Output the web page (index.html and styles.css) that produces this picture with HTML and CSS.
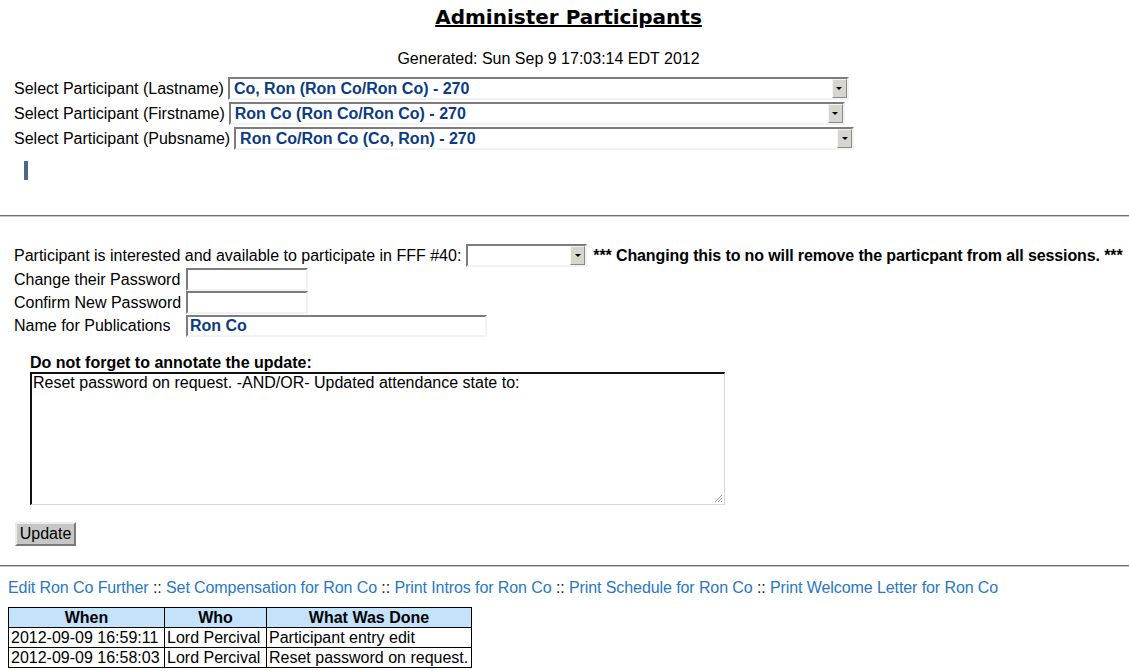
FILE: index.html
```html
<!DOCTYPE html>
<html>
<head>
<meta charset="utf-8">
<title>Administer Participants</title>
<link rel="stylesheet" href="styles.css">
</head>
<body>
<h1 class="title">Administer Participants</h1>
<p class="generated">Generated: Sun Sep 9 17:03:14 EDT 2012</p>

<div class="pickers">
  <div class="pick-row">
    <span class="pick-label">Select Participant (Lastname)</span>
    <div class="sel sel-last"><span class="sel-text">Co, Ron (Ron Co/Ron Co) - 270</span><span class="sel-btn"><span class="tri"></span></span></div>
  </div>
  <div class="pick-row">
    <span class="pick-label">Select Participant (Firstname)</span>
    <div class="sel sel-first"><span class="sel-text">Ron Co (Ron Co/Ron Co) - 270</span><span class="sel-btn"><span class="tri"></span></span></div>
  </div>
  <div class="pick-row">
    <span class="pick-label">Select Participant (Pubsname)</span>
    <div class="sel sel-pubs"><span class="sel-text">Ron Co/Ron Co (Co, Ron) - 270</span><span class="sel-btn"><span class="tri"></span></span></div>
  </div>
  <span class="cursor-bar"></span>
</div>

<hr class="rule rule-top">

<form class="edit-form">
  <div class="interest-row">
    <span>Participant is interested and available to participate in FFF #40:</span>
    <div class="sel sel-interest"><span class="sel-text"></span><span class="sel-btn"><span class="tri"></span></span></div>
    <strong class="warning">*** Changing this to no will remove the particpant from all sessions. ***</strong>
  </div>
  <div class="field-grid">
    <span class="field-label">Change their Password</span>
    <span class="inp inp-short"></span>
    <span class="field-label">Confirm New Password</span>
    <span class="inp inp-short"></span>
    <span class="field-label">Name for Publications</span>
    <span class="inp inp-long">Ron Co</span>
  </div>
  <div class="annotate">
    <div class="annotate-label">Do not forget to annotate the update:</div>
    <div class="textarea">Reset password on request. -AND/OR- Updated attendance state to:<span class="grip"><svg width="10" height="10" viewBox="0 0 10 10"><path d="M9 2 L2 9 M9 5 L5 9 M9 8 L8 9" stroke="#999" stroke-width="1"/></svg></span></div>
  </div>
  <div class="actions"><span class="button">Update</span></div>
</form>

<hr class="rule rule-bottom">

<div class="links">
  <a href="#">Edit Ron Co Further</a> :: <a href="#">Set Compensation for Ron Co</a> :: <a href="#">Print Intros for Ron Co</a> :: <a href="#">Print Schedule for Ron Co</a> :: <a href="#">Print Welcome Letter for Ron Co</a>
</div>

<table class="history">
  <tr><th class="c-when">When</th><th class="c-who">Who</th><th class="c-what">What Was Done</th></tr>
  <tr><td>2012-09-09 16:59:11</td><td>Lord Percival</td><td>Participant entry edit</td></tr>
  <tr><td>2012-09-09 16:58:03</td><td>Lord Percival</td><td>Reset password on request.</td></tr>
</table>
</body>
</html>
```

FILE: styles.css
```css
html, body {
  margin: 0;
  padding: 0;
  background: #fff;
}
body {
  font-family: "Liberation Sans", Arial, sans-serif;
  font-size: 16px;
  color: #000;
}
.title {
  font-family: "DejaVu Sans", Verdana, sans-serif;
  font-weight: bold;
  font-size: 20px;
  line-height: 24px;
  text-decoration: underline;
  text-align: center;
  margin: 5px 0 0;
  padding-left: 8px;
}
.generated {
  text-align: center;
  margin: 20px 0 0;
  line-height: 19px;
  padding-right: 32px;
}
.pickers {
  padding: 0 0 0 14px;
  margin-top: 9px;
  display: flex;
  flex-direction: column;
}
.pick-row {
  display: flex;
  align-items: center;
  gap: 4px;
  height: 25px;
}
.pick-row:first-child { margin-top: -1px; }
.sel {
  display: flex;
  align-items: stretch;
  flex-shrink: 0;
  height: 23px;
  box-sizing: border-box;
  border-style: solid;
  border-width: 2px;
  border-color: #7c7c7c #f2f2f2 #f2f2f2 #7c7c7c;
  background: #fff;
}
.sel-last { width: 621px; }
.sel-first { width: 616px; }
.sel-pubs { width: 620px; }
.sel-text {
  flex: 1;
  font-weight: bold;
  color: #0b3b82;
  padding-left: 4px;
  line-height: 19px;
  white-space: nowrap;
  overflow: hidden;
}
.sel-btn {
  width: 15px;
  box-sizing: border-box;
  background: #d6d5cf;
  border-style: solid;
  border-width: 1px;
  border-color: #f4f4f2 #8a8a86 #8a8a86 #f4f4f2;
  display: flex;
  align-items: center;
  justify-content: center;
}
.tri {
  width: 0;
  height: 0;
  border-left: 3px solid transparent;
  border-right: 3px solid transparent;
  border-top: 3px solid #000;
}
.cursor-bar {
  display: block;
  width: 4px;
  height: 19px;
  background: #4b6a8a;
  margin: 10px 0 0 10px;
}
.rule {
  border: 0;
  height: 0;
  margin: 0;
  border-top: 1px solid #6e6e6e;
  border-bottom: 1px solid #c8c8c8;
}
.rule-top { margin-top: 35px; }
.edit-form {
  padding: 27px 0 0 14px;
  margin: 0;
}
.interest-row {
  display: flex;
  align-items: center;
  height: 23px;
  white-space: nowrap;
}
.sel-interest {
  width: 121px;
  margin-left: 5px;
}
.warning {
  margin-left: 6px;
  font-weight: bold;
  letter-spacing: -0.12px;
}
.field-grid {
  display: grid;
  grid-template-columns: 172px auto;
  grid-template-rows: 23px 23px 23px;
  justify-items: start;
  align-items: center;
  margin-top: 1px;
}
.field-label {
  white-space: nowrap;
}
.inp {
  box-sizing: border-box;
  height: 23px;
  border-style: solid;
  border-width: 2px;
  border-color: #7c7c7c #f2f2f2 #f2f2f2 #7c7c7c;
  background: #fff;
  font-weight: bold;
  color: #0b3b82;
  padding-left: 2px;
  line-height: 19px;
}
.inp-short { width: 122px; }
.inp-long { width: 301px; height: 22px; line-height: 18px; }
.annotate {
  padding-left: 16px;
  margin-top: 16px;
}
.annotate-label {
  font-weight: bold;
  line-height: 19px;
}
.textarea {
  position: relative;
  box-sizing: border-box;
  width: 695px;
  height: 133px;
  border-style: solid;
  border-width: 2px 1px 1px 2px;
  border-color: #111 #d8d8d8 #d8d8d8 #111;
  padding: 0 0 0 1px;
  line-height: 18px;
}
.grip {
  position: absolute;
  right: 1px;
  bottom: 1px;
  width: 10px;
  height: 10px;
  display: block;
}
.grip svg { display: block; }
.actions {
  padding: 17px 0 0 1px;
}
.button {
  display: inline-block;
  box-sizing: border-box;
  width: 61px;
  height: 24px;
  background: #c6c6c6;
  border-style: solid;
  border-width: 2px;
  border-color: #ececec #7a7a7a #7a7a7a #ececec;
  text-align: center;
  line-height: 20px;
}
.rule-bottom { margin-top: 19px; }
.links {
  padding: 11px 0 0 8px;
  line-height: 19px;
  color: #222;
  letter-spacing: -0.09px;
}
.links a {
  color: #2878c4;
  text-decoration: none;
}
.history {
  margin: 10px 0 0 8px;
  border-collapse: collapse;
  border: 1px solid #000;
}
.history th, .history td {
  border: 1px solid #000;
  padding: 0 2px;
  height: 19px;
  line-height: 18px;
  white-space: nowrap;
}
.history th {
  background: #c4e2fa;
  font-weight: bold;
  text-align: center;
}
.c-when { width: 151px; }
.c-who { width: 97px; }
.c-what { width: 200px; }
```
